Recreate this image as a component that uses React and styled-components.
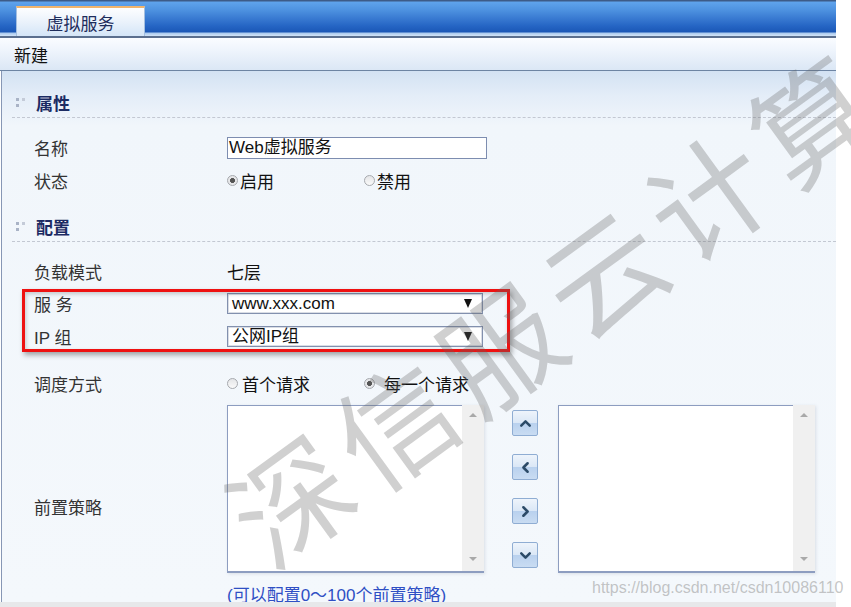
import React from "react";
import styled, { createGlobalStyle } from "styled-components";
import { ChevronUp, ChevronDown, ChevronLeft, ChevronRight } from "lucide-react";

const GlobalStyle = createGlobalStyle`
  html, body {
    margin: 0;
    padding: 0;
    background: #ffffff;
  }
  body {
    font-family: "Liberation Sans", "Noto Sans CJK SC", sans-serif;
    font-size: 17px;
    color: #222;
  }
`;

const Root = styled.div`
  position: relative;
  width: 851px;
  height: 607px;
  overflow: hidden;
  background: #fff;
`;

const Frame = styled.div`
  width: 836px;
  height: 602px;
  display: flex;
  flex-direction: column;
  overflow: hidden;
`;

const BottomStrip = styled.div`
  width: 836px;
  height: 5px;
  background: #e7e8ea;
`;

const TabBar = styled.div`
  flex-shrink: 0;
  height: 36px;
  display: flex;
  align-items: flex-end;
  padding-left: 16px;
  border-bottom: 2px solid #5b6f8e;
  background: linear-gradient(
    to bottom,
    #3d5b88 0,
    #3d5b88 1px,
    #5fa3ec 2px,
    #4e92e0 10px,
    #3a7bd2 18px,
    #2565c4 26px,
    #1b57b6 32px,
    #a9c9ee 33px,
    #d3e4f7 36px
  );
`;

const Tab = styled.div`
  width: 127px;
  height: 28px;
  display: flex;
  align-items: center;
  justify-content: center;
  border-top: 2px solid #f1b46c;
  border-left: 1px solid #a4bfe0;
  border-right: 1px solid #a4bfe0;
  background: linear-gradient(to bottom, #fdfeff 0, #eaf2fb 50%, #d4e5f7 100%);
  color: #1e2d5c;
  font-size: 17px;
`;

const Toolbar = styled.div`
  flex-shrink: 0;
  height: 32px;
  display: flex;
  align-items: center;
  padding-left: 14px;
  border-bottom: 1px solid #6d84a3;
  background: linear-gradient(to bottom, #fafcff 0, #eef4fc 40%, #dbe7f5 100%);
  color: #111;
  font-size: 17px;
`;

const Content = styled.div`
  flex: 1;
  min-height: 0;
  margin-left: 1px;
  border-left: 1px solid #8797b5;
  padding-top: 17px;
  background: linear-gradient(
    to bottom,
    #d3e2f3 0,
    #e4edf8 25px,
    #f1f6fb 55px,
    #f4f8fc 100%
  );
`;

const SectionHeader = styled.div`
  height: 29px;
  margin-left: 10px;
  padding-left: 4px;
  display: flex;
  align-items: center;
  gap: 10px;
  border-bottom: 1px dashed #c3c8d2;
  margin-top: ${(p) => p.$top || 0}px;
`;

const SectionTitle = styled.span`
  font-weight: bold;
  font-size: 17px;
  color: #1c2b63;
`;

const Row = styled.div`
  display: grid;
  grid-template-columns: 193px 1fr;
  align-items: center;
  height: ${(p) => p.$h}px;
  padding-left: 32px;
  margin-top: ${(p) => p.$top || 0}px;
`;

const Label = styled.span`
  color: #333;
  font-size: 17px;
`;

const ValueText = styled.span`
  color: #111;
  font-size: 17px;
`;

const TextInput = styled.div`
  width: 257px;
  height: 20px;
  line-height: 20px;
  border: 1px solid #7d8db0;
  background: #fff;
  display: flex;
  align-items: center;
  padding-left: 1px;
  font-size: 17px;
  color: #111;
`;

const Select = styled.div`
  width: 240px;
  height: 19px;
  line-height: 19px;
  border: 1px solid #8290ae;
  box-shadow: inset 0 0 0 1px #d9dde5;
  background: #fff;
  display: flex;
  align-items: center;
  justify-content: space-between;
  padding: 0 10px 0 4px;
  font-size: 17px;
  color: #111;
`;

const Caret = styled.span`
  width: 0;
  height: 0;
  border-left: 4px solid transparent;
  border-right: 4px solid transparent;
  border-top: 9px solid #111;
`;

const RadioGroup = styled.div`
  display: flex;
  align-items: center;
`;

const RadioOption = styled.label`
  width: ${(p) => p.$w}px;
  display: flex;
  align-items: center;
  gap: ${(p) => p.$gap}px;
  color: #111;
  font-size: 17px;
`;

const RadioDot = styled.span`
  flex-shrink: 0;
  width: 9px;
  height: 9px;
  border-radius: 50%;
  border: 1px solid #a6a9ae;
  background: ${(p) =>
    p.$checked
      ? "radial-gradient(circle, #555 0, #555 2.2px, #e6e7e9 2.8px)"
      : "linear-gradient(#e4e5e7, #fafafa)"};
`;

const HighlightGroup = styled.div`
  position: relative;
`;

const RedBox = styled.div`
  position: absolute;
  left: 20px;
  top: 2px;
  width: 482px;
  height: 57px;
  border: 3px solid #ee1111;
  box-shadow: 2px 3px 5px rgba(0, 0, 0, 0.35), inset 1px 2px 4px rgba(0, 0, 0, 0.2);
  pointer-events: none;
`;

const PolicyRow = styled.div`
  display: grid;
  grid-template-columns: 193px 1fr;
  padding-left: 32px;
  margin-top: 5px;
`;

const PolicyLabel = styled(Label)`
  align-self: center;
  padding-top: 2px;
`;

const Transfer = styled.div`
  display: flex;
  align-items: flex-start;
`;

const ListBox = styled.div`
  width: 256px;
  height: 166px;
  display: flex;
  background: #fff;
  border-left: 1px solid #8d9dc0;
  border-bottom: 2px solid #8d9dc0;
  box-shadow: 1px 1px 3px rgba(140, 150, 170, 0.25);
`;

const ListArea = styled.div`
  flex: 1;
  border-top: 1px solid #8d9dc0;
`;

const ScrollTrack = styled.div`
  width: 22px;
  background: #f0f0f0;
  display: flex;
  flex-direction: column;
  justify-content: space-between;
  align-items: center;
  padding: 8px 0 10px;
`;

const ArrowUp = styled.span`
  width: 0;
  height: 0;
  border-left: 4px solid transparent;
  border-right: 4px solid transparent;
  border-bottom: 4px solid #a9a9a9;
`;

const ArrowDown = styled.span`
  width: 0;
  height: 0;
  border-left: 4px solid transparent;
  border-right: 4px solid transparent;
  border-top: 4px solid #a9a9a9;
`;

const ButtonColumn = styled.div`
  width: 26px;
  margin: 5px 20px 0 28px;
  display: flex;
  flex-direction: column;
  gap: 18px;
`;

const MoveButton = styled.button`
  width: 26px;
  height: 26px;
  padding: 0;
  border: 1px solid #8fadd3;
  border-radius: 2px;
  display: flex;
  align-items: center;
  justify-content: center;
  background: linear-gradient(to bottom, #eef4fb 0, #dae7f6 50%, #b9d1ee 51%, #c9dcf2 100%);
  color: #2b4a67;
`;

const Note = styled.div`
  padding-top: 13px;
  line-height: 20px;
  font-size: 17px;
  color: #2f4fc4;
`;

const Watermark = styled.div`
  position: absolute;
  left: 240px;
  top: 472px;
  transform-origin: 0 50%;
  transform: rotate(-36deg);
  font-family: "Noto Sans CJK SC", sans-serif;
  font-size: 118px;
  font-weight: 400;
  letter-spacing: 11px;
  line-height: 1;
  white-space: nowrap;
  color: rgba(100, 100, 100, 0.3);
  pointer-events: none;
`;

const UrlMark = styled.div`
  position: absolute;
  left: 592px;
  top: 579px;
  font-family: "Liberation Sans", sans-serif;
  font-size: 16px;
  color: rgba(150, 150, 150, 0.55);
  white-space: nowrap;
  pointer-events: none;
`;

function GripIcon() {
  return (
    <svg width="10" height="12" viewBox="0 0 10 12">
      <rect x="0" y="1" width="3" height="3" fill="#a9b3c6" />
      <rect x="6" y="1" width="3" height="3" fill="#c4cbd8" />
      <rect x="0" y="7" width="3" height="3" fill="#a9b3c6" />
    </svg>
  );
}

function Radio({ label, checked, width, gap }) {
  return (
    <RadioOption $w={width} $gap={gap}>
      <RadioDot $checked={checked} />
      {label}
    </RadioOption>
  );
}

function List() {
  return (
    <ListBox>
      <ListArea />
      <ScrollTrack>
        <ArrowUp />
        <ArrowDown />
      </ScrollTrack>
    </ListBox>
  );
}

export default function App() {
  return (
    <Root>
      <GlobalStyle />
      <Frame>
        <TabBar>
          <Tab>虚拟服务</Tab>
        </TabBar>
        <Toolbar>新建</Toolbar>
        <Content>
          <SectionHeader>
            <GripIcon />
            <SectionTitle>属性</SectionTitle>
          </SectionHeader>
          <Row $h={33} $top={13}>
            <Label>名称</Label>
            <TextInput>Web虚拟服务</TextInput>
          </Row>
          <Row $h={33}>
            <Label>状态</Label>
            <RadioGroup>
              <Radio label="启用" checked width={137} gap={2} />
              <Radio label="禁用" width={80} gap={2} />
            </RadioGroup>
          </Row>
          <SectionHeader $top={15}>
            <GripIcon />
            <SectionTitle>配置</SectionTitle>
          </SectionHeader>
          <Row $h={31} $top={14}>
            <Label>负载模式</Label>
            <ValueText>七层</ValueText>
          </Row>
          <HighlightGroup>
            <Row $h={33}>
              <Label>服 务</Label>
              <Select>
                www.xxx.com
                <Caret />
              </Select>
            </Row>
            <Row $h={33}>
              <Label>IP 组</Label>
              <Select>
                公网IP组
                <Caret />
              </Select>
            </Row>
            <RedBox />
          </HighlightGroup>
          <Row $h={34} $top={13}>
            <Label>调度方式</Label>
            <RadioGroup>
              <Radio label="首个请求" width={137} gap={4} />
              <Radio label="每一个请求" checked width={140} gap={9} />
            </RadioGroup>
          </Row>
          <PolicyRow>
            <PolicyLabel>前置策略</PolicyLabel>
            <div>
              <Transfer>
                <List />
                <ButtonColumn>
                  <MoveButton>
                    <ChevronUp size={17} strokeWidth={3.5} />
                  </MoveButton>
                  <MoveButton>
                    <ChevronLeft size={17} strokeWidth={3.5} />
                  </MoveButton>
                  <MoveButton>
                    <ChevronRight size={17} strokeWidth={3.5} />
                  </MoveButton>
                  <MoveButton>
                    <ChevronDown size={17} strokeWidth={3.5} />
                  </MoveButton>
                </ButtonColumn>
                <List />
              </Transfer>
              <Note>(可以配置0～100个前置策略)</Note>
            </div>
          </PolicyRow>
        </Content>
      </Frame>
      <BottomStrip />
      <Watermark>深信服云计算</Watermark>
      <UrlMark>https://blog.csdn.net/csdn10086110</UrlMark>
    </Root>
  );
}
